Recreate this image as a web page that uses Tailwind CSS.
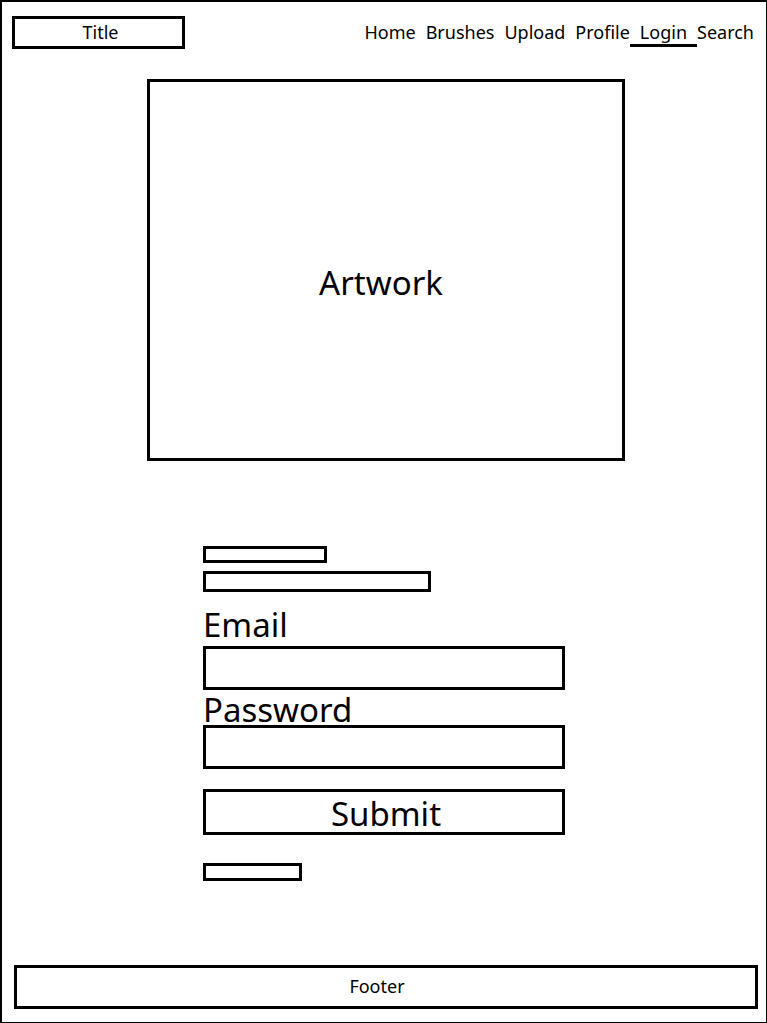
<!DOCTYPE html>
<html lang="en">
<head>
<meta charset="utf-8">
<meta name="viewport" content="width=device-width, initial-scale=1">
<title>Login</title>
<script src="https://cdn.jsdelivr.net/npm/@tailwindcss/browser@4"></script>
</head>
<body class="flex min-h-screen flex-col border-t-2 border-r border-b border-l-2 border-black bg-white font-['Noto_Sans',sans-serif] text-[18px] leading-6 text-black">
  <header class="flex items-start justify-between pt-[14px] pr-3 pl-[10px]">
    <h1 class="flex h-[33px] w-[173px] items-center justify-center border-3 border-black pb-[2px] pl-1">Title</h1>
    <nav class="flex gap-[10px] pt-1">
      <a href="#">Home</a>
      <a href="#">Brushes</a>
      <a href="#">Upload</a>
      <a href="#">Profile</a>
      <a href="#" aria-current="page" class="-mx-[10px] border-b-3 border-black px-[10px]">Login</a>
      <a href="#">Search</a>
    </nav>
  </header>

  <main class="flex flex-col items-center pt-[30px]">
    <section class="ml-1 flex h-[382px] w-full max-w-[478px] items-center justify-center border-3 border-black pt-[26px] pr-[10px] text-[33px] leading-10">Artwork</section>

    <form class="mt-[85px] flex w-full max-w-[362px] flex-col items-start text-[33px] leading-9">
      <div class="h-[17px] w-[124px] border-3 border-black"></div>
      <div class="mt-2 h-[21px] w-[228px] border-3 border-black"></div>
      <label for="email" class="mt-[15px] mb-[3px]">Email</label>
      <input id="email" type="email" class="h-11 w-full border-3 border-black px-2 text-[18px]">
      <label for="password" class="mt-[2px] -mb-[3px]">Password</label>
      <input id="password" type="password" class="h-11 w-full border-3 border-black px-2 text-[18px]">
      <button type="submit" class="mt-5 flex h-[46px] w-full items-center justify-center border-3 border-black pt-1 pl-1">Submit</button>
      <div class="mt-7 h-[18px] w-[99px] border-3 border-black"></div>
    </form>
  </main>

  <footer class="mt-auto mr-2 mb-[13px] ml-3 flex h-11 items-center justify-center border-3 border-black pr-[18px] pb-[2px]">Footer</footer>
</body>
</html>
